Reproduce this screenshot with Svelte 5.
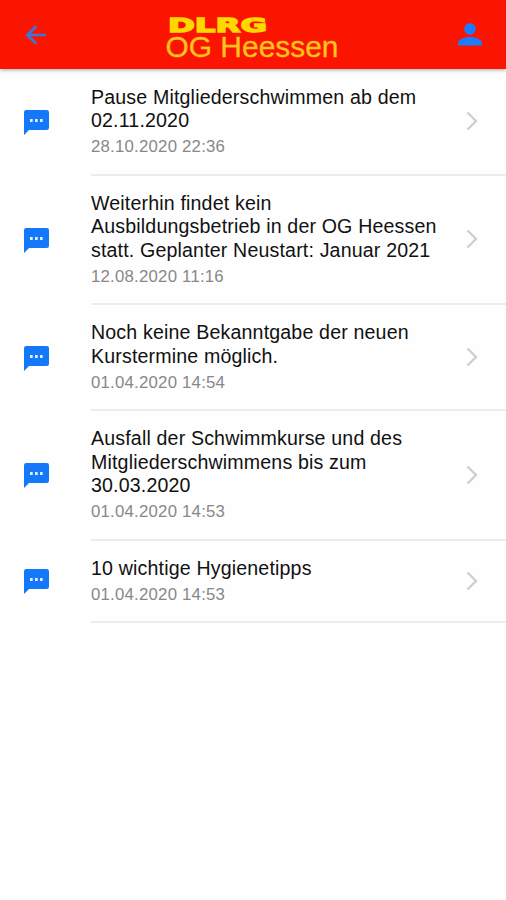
<script>
  // Liste der Mitteilungen
  const messages = [
    { id: 1, title: 'Pause Mitgliederschwimmen ab dem 02.11.2020', date: '28.10.2020 22:36' },
    { id: 2, title: 'Weiterhin findet kein Ausbildungsbetrieb in der OG Heessen statt. Geplanter Neustart: Januar 2021', date: '12.08.2020 11:16' },
    { id: 3, title: 'Noch keine Bekanntgabe der neuen Kurstermine möglich.', date: '01.04.2020 14:54' },
    { id: 4, title: 'Ausfall der Schwimmkurse und des Mitgliederschwimmens bis zum 30.03.2020', date: '01.04.2020 14:53' },
    { id: 5, title: '10 wichtige Hygienetipps', date: '01.04.2020 14:53' },
  ];
</script>

<div class="app">
  <header class="toolbar">
    <button class="back" aria-label="Zurück">
      <svg width="22" height="20" viewBox="0 0 22 20">
        <path d="M22 10H3.5M12.300 1.200L3.200 10l9.100 8.800" />
      </svg>
    </button>
    <svg class="logo" width="178" height="56" viewBox="0 0 178 56">
      <text class="brand" x="5" y="24.500" textLength="99" lengthAdjust="spacingAndGlyphs">DLRG</text>
      <text class="group" x="2.5" y="49.500" textLength="173" lengthAdjust="spacingAndGlyphs">OG Heessen</text>
    </svg>
    <button class="profile" aria-label="Profil">
      <svg width="24" height="23" viewBox="0 0 24 23">
        <circle cx="12" cy="6" r="5.7" />
        <path d="M0 22.5v-2C0 16.5 6 14 12 14s12 2.5 12 6.5v2z" />
      </svg>
    </button>
  </header>

  <ul class="list">
    {#each messages as message (message.id)}
      <li class="item">
        <svg class="bubble" width="25" height="25" viewBox="0 0 25 25">
          <path d="M2.2 0h20.6Q25 0 25 2.2v15.6Q25 20 22.8 20H5l-5 5V2.2Q0 0 2.2 0z" />
          <g fill="#e3efff">
            <rect x="6" y="9" width="2.7" height="3" />
            <rect x="11" y="9" width="2.7" height="3" />
            <rect x="16" y="9" width="2.7" height="3" />
          </g>
        </svg>
        <div class="content">
          <div class="text">
            <h2>{message.title}</h2>
            <p>{message.date}</p>
          </div>
          <svg class="chevron" width="12" height="20" viewBox="0 0 12 20">
            <path d="M1.5 1.5L10 10l-8.5 8.5" />
          </svg>
        </div>
      </li>
    {/each}
  </ul>
</div>

<style>
  :global(body) {
    background: #fefefe;
  }

  .app {
    min-height: 900px;
    box-sizing: border-box;
    font-family: "Liberation Sans", Arial, sans-serif;
    color: #111;
  }

  .toolbar {
    display: flex;
    align-items: center;
    justify-content: space-between;
    height: 69px;
    padding: 0 24px;
    box-sizing: border-box;
    background: #fb1500;
    box-shadow: 0 1px 4px rgba(0, 0, 0, 0.35);
  }

  button {
    display: flex;
    padding: 0;
    border: none;
    background: none;
  }

  .back path {
    fill: none;
    stroke: #3478e0;
    stroke-width: 2.6;
  }

  .profile {
    fill: #1a7cff;
  }

  .logo {
    overflow: visible;
  }

  .brand {
    font: bold 20px "DejaVu Sans", sans-serif;
    fill: #ffd800;
    stroke: #ffd800;
    stroke-width: 1.4;
  }

  .group {
    font-size: 29px;
    fill: #ffc21a;
    stroke: #ffc21a;
    stroke-width: 0.3;
  }

  .list {
    margin: 0;
    padding: 0.5px 0 0;
    list-style: none;
  }

  .item {
    display: flex;
    align-items: center;
    padding-left: 24px;
  }

  .bubble {
    flex: none;
    margin-right: 42px;
    fill: #1478fa;
  }

  .content {
    display: flex;
    flex: 1;
    align-items: center;
    padding: 16px 28px 16.5px 0;
    border-bottom: 2px solid #ececec;
  }

  .text {
    flex: 1;
    padding-right: 27px;
  }

  h2 {
    margin: 0;
    font-size: 19.6px;
    font-weight: normal;
    line-height: 23.5px;
    letter-spacing: 0.16px;
  }

  p {
    margin: 4.5px 0 0;
    font-size: 16.8px;
    line-height: 20px;
    letter-spacing: 0.22px;
    color: #888;
  }

  .chevron {
    flex: none;
    fill: none;
    stroke: #cfcfcf;
    stroke-width: 2.4;
  }
</style>
